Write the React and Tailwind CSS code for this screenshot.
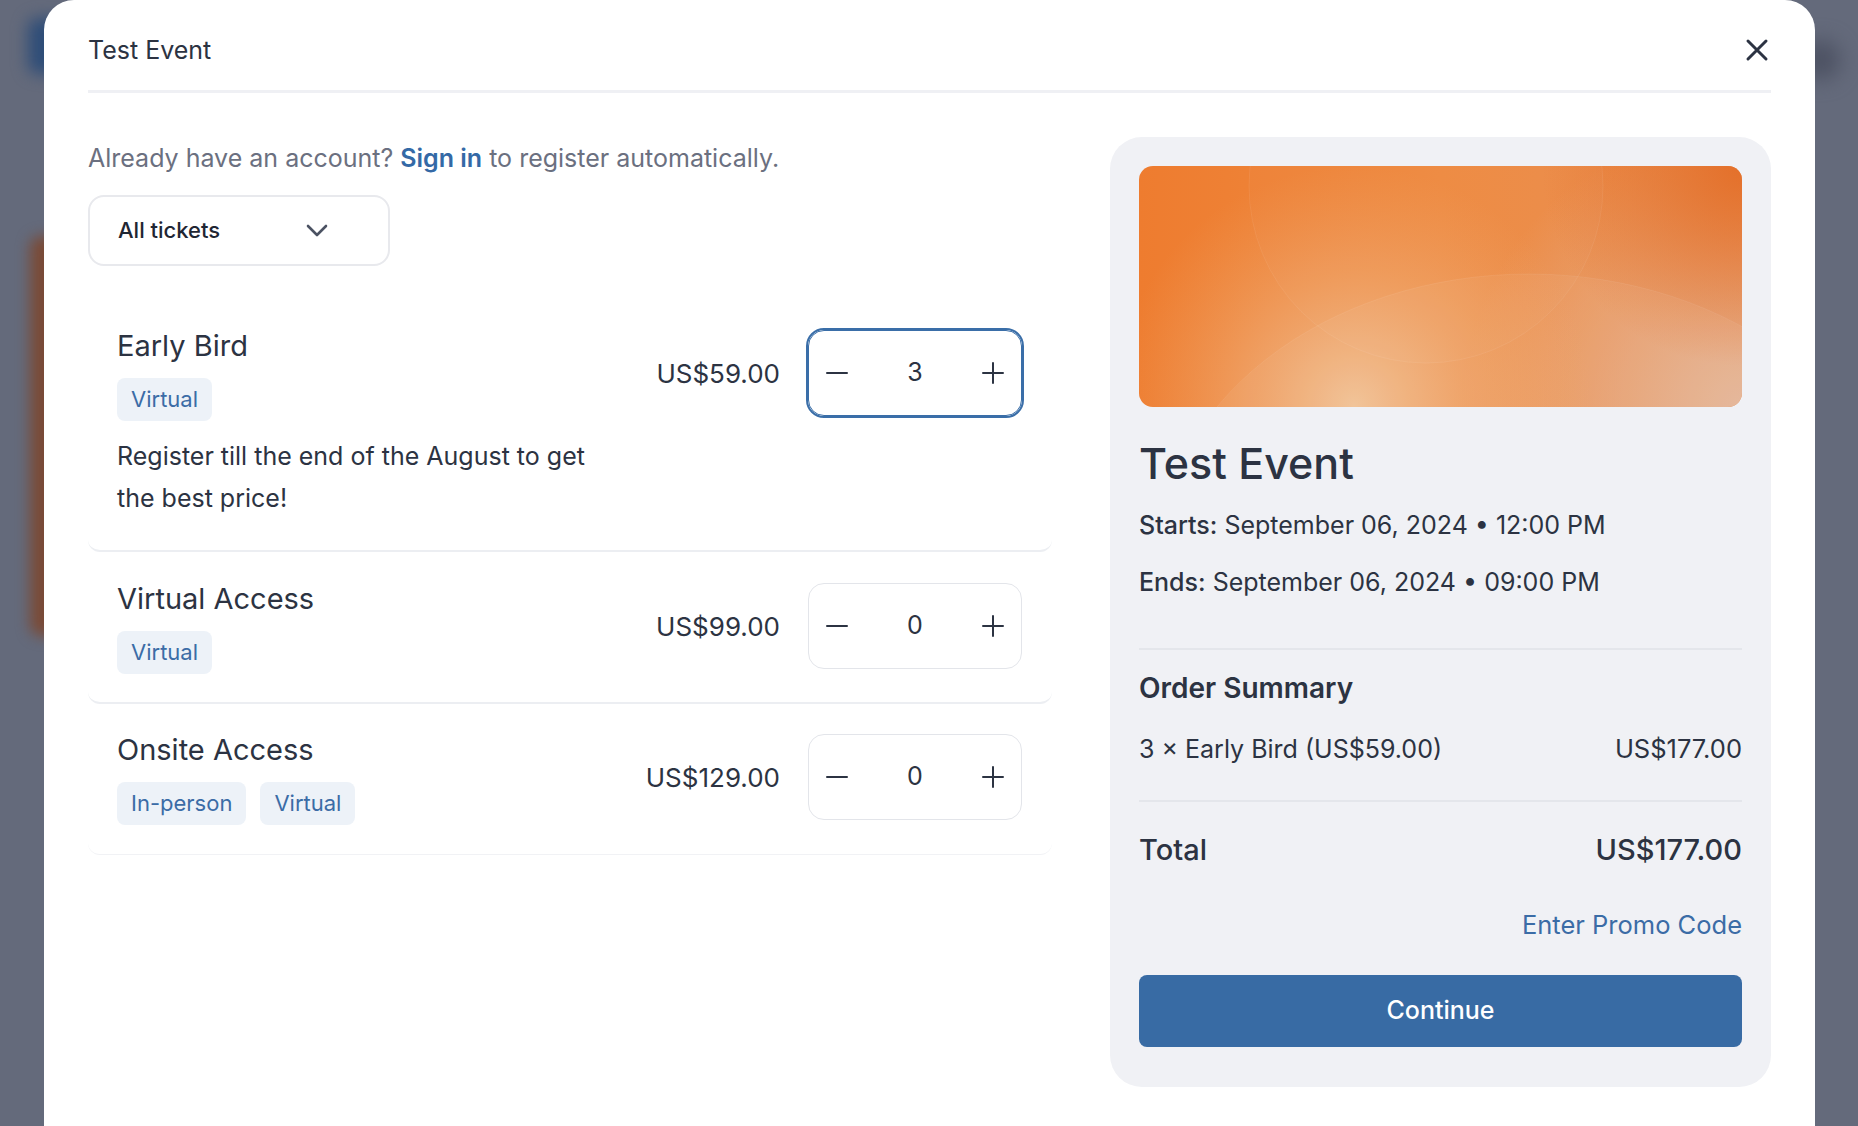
import { useState } from 'react';

const tickets = [
  {
    name: 'Early Bird',
    tags: ['Virtual'],
    price: 'US$59.00',
    description: 'Register till the end of the August to get the best price!',
    qty: 3,
    focused: true,
  },
  { name: 'Virtual Access', tags: ['Virtual'], price: 'US$99.00', qty: 0 },
  { name: 'Onsite Access', tags: ['In-person', 'Virtual'], price: 'US$129.00', qty: 0 },
];

const MinusIcon = () => (
  <svg width="22" height="22" viewBox="0 0 22 22" fill="none">
    <path d="M1 11h20" stroke="#2c3342" strokeWidth="2" strokeLinecap="round" />
  </svg>
);

const PlusIcon = () => (
  <svg width="22" height="22" viewBox="0 0 22 22" fill="none">
    <path d="M1 11h20M11 1v20" stroke="#2c3342" strokeWidth="2" strokeLinecap="round" />
  </svg>
);

const CloseIcon = () => (
  <svg width="24" height="24" viewBox="0 0 24 24" fill="none">
    <path d="M3 3l18 18M21 3L3 21" stroke="#2c3342" strokeWidth="3" strokeLinecap="round" />
  </svg>
);

const ChevronIcon = () => (
  <svg width="22" height="13" viewBox="0 0 22 13" fill="none">
    <path d="M2 2l9 9 9-9" stroke="#4b5262" strokeWidth="2.6" strokeLinecap="round" strokeLinejoin="round" />
  </svg>
);

// event cover art
const Cover = () => (
  <svg width="603" height="241" viewBox="0 0 603 241" className="block rounded-[14px]">
    <defs>
      <linearGradient id="base" x1="0" y1="0" x2="1" y2="0">
        <stop offset="0" stopColor="#ee7c2f" />
        <stop offset="0.5" stopColor="#ee8a40" />
        <stop offset="1" stopColor="#e88d50" />
      </linearGradient>
      <radialGradient id="glow" cx="215" cy="240" r="240" gradientUnits="userSpaceOnUse">
        <stop offset="0" stopColor="#f1c194" stopOpacity="1" />
        <stop offset="0.45" stopColor="#f0b07c" stopOpacity="0.6" />
        <stop offset="1" stopColor="#efa264" stopOpacity="0" />
      </radialGradient>
      <radialGradient id="br" cx="603" cy="241" r="280" gradientUnits="userSpaceOnUse">
        <stop offset="0" stopColor="#e4b597" stopOpacity="1" />
        <stop offset="1" stopColor="#e4b597" stopOpacity="0" />
      </radialGradient>
      <radialGradient id="tr" cx="603" cy="0" r="200" gradientUnits="userSpaceOnUse">
        <stop offset="0" stopColor="#e4702a" stopOpacity="1" />
        <stop offset="1" stopColor="#e4702a" stopOpacity="0" />
      </radialGradient>
    </defs>
    <rect width="603" height="241" fill="url(#base)" />
    <rect width="603" height="241" fill="url(#br)" />
    <rect width="603" height="241" fill="url(#tr)" />
    <rect width="603" height="241" fill="url(#glow)" />
    <circle cx="287" cy="20" r="177" fill="#ffffff" fillOpacity="0.025" stroke="#ffffff" strokeOpacity="0.07" />
    <ellipse cx="390" cy="400" rx="372" ry="292" fill="#ffffff" fillOpacity="0.05" stroke="#ffffff" strokeOpacity="0.07" />
  </svg>
);

const Stepper = ({ value, focused }) => (
  <div
    className={
      focused
        ? 'mt-[2px] flex h-[86px] w-[214px] items-center justify-between rounded-[16px] border border-[#3a6ea8] px-[17px] outline-2 outline-solid outline-[#3a6ea8]'
        : 'mt-[2px] flex h-[86px] w-[214px] items-center justify-between rounded-[16px] border border-[#e3e5ea] px-[17px]'
    }
  >
    <button className="flex items-center"><MinusIcon /></button>
    <span className="text-[25px] text-[#2c3342]">{value}</span>
    <button className="flex items-center"><PlusIcon /></button>
  </div>
);

const TicketRow = ({ ticket, last }) => (
  <div
    className={
      last
        ? 'flex items-start justify-between rounded-[12px] border-b border-[#f1f2f5] pt-[28px] pr-[30px] pb-[29px] pl-[29px]'
        : 'flex items-start justify-between rounded-[12px] border-b-2 border-[#eceef2] pt-[29px] pr-[30px] pb-[28px] pl-[29px]'
    }
  >
    <div>
      <h3 className="text-[29px] leading-[36px] text-[#2c3342]">{ticket.name}</h3>
      <div className="mt-[14px] flex gap-[14px]">
        {ticket.tags.map((tag) => (
          <span
            key={tag}
            className="flex h-[43px] items-center rounded-[8px] bg-[#edf2f8] px-[14px] text-[22px] text-[#3b6ca6]"
          >
            {tag}
          </span>
        ))}
      </div>
      {ticket.description && (
        <p className="mt-[14px] w-[490px] pb-[3px] text-[25px] leading-[42px] text-[#2c3342]">{ticket.description}</p>
      )}
    </div>
    <div className="flex items-center gap-[28px]">
      <span className="mt-[2px] text-[26px] text-[#2c3342]">{ticket.price}</span>
      <Stepper value={ticket.qty} focused={ticket.focused} />
    </div>
  </div>
);

export default function App() {
  const [open] = useState(true);

  return (
    <div className="relative h-[1126px] overflow-hidden bg-[#646a7b] font-['Inter','Noto_Sans',sans-serif]">
      {/* blurred page behind the backdrop */}
      <div className="absolute top-[18px] left-[28px] h-[56px] w-[60px] rounded-[10px] bg-[#2e4d78] blur-[8px]" />
      <div className="absolute top-[236px] left-[30px] h-[400px] w-[60px] rounded-[12px] bg-[#7a4a36] blur-[7px]" />
      <div className="absolute top-[40px] left-[1800px] h-[40px] w-[40px] rounded-full bg-[#4d5263] blur-[10px]" />

      {open && (
        <div className="relative ml-[44px] h-[1160px] w-[1771px] rounded-t-[30px] bg-white px-[44px]">
          <div className="flex items-start justify-between pt-[34px] pb-[24px]">
            <h2 className="text-[25px] leading-[32px] text-[#2c3342]">Test Event</h2>
            <button className="mt-[4px] mr-[2px]"><CloseIcon /></button>
          </div>
          <div className="h-[3px] bg-[#eff0f4]" />

          <div className="flex gap-[58px] pt-[44px]">
            <div className="w-[964px]">
              <p className="text-[25px] leading-[42px] text-[#6b7080]">
                Already have an account?{' '}
                <a className="font-semibold text-[#3469a6]">Sign in</a> to register automatically.
              </p>
              <div className="mt-[16px] flex h-[71px] w-[302px] items-center justify-between rounded-[16px] border-2 border-[#e8e9ed] pr-[60px] pl-[28px]">
                <span className="text-[22px] font-medium text-[#1f2633]">All tickets</span>
                <ChevronIcon />
              </div>

              <div className="mt-[33px]">
                {tickets.map((t, i) => (
                  <TicketRow key={t.name} ticket={t} last={i === tickets.length - 1} />
                ))}
              </div>
            </div>

            <div className="w-[661px] self-start rounded-[32px] bg-[#f0f1f5] px-[29px] pt-[29px] pb-[40px]">
              <Cover />
              <h1 className="mt-[31px] text-[43px] leading-[50px] font-medium text-[#2c3342]">Test Event</h1>
              <p className="mt-[18px] text-[25px] leading-[38px] text-[#2c3342]">
                <span className="font-medium">Starts:</span> September 06, 2024 • 12:00 PM
              </p>
              <p className="mt-[19px] text-[25px] leading-[38px] text-[#2c3342]">
                <span className="font-medium">Ends:</span> September 06, 2024 • 09:00 PM
              </p>
              <div className="mt-[47px] h-[2px] bg-[#e4e6eb]" />
              <h3 className="mt-[20px] text-[28px] leading-[36px] font-semibold text-[#2c3342]">Order Summary</h3>
              <div className="mt-[24px] flex justify-between text-[25px] leading-[38px] text-[#2c3342]">
                <span>3 × Early Bird (US$59.00)</span>
                <span className="text-[25.5px]">US$177.00</span>
              </div>
              <div className="mt-[32px] h-[2px] bg-[#e4e6eb]" />
              <div className="mt-[28px] flex justify-between text-[29px] leading-[40px] font-medium text-[#2c3342]">
                <span>Total</span>
                <span>US$177.00</span>
              </div>
              <p className="mt-[36px] text-right text-[25.5px] leading-[38px] text-[#3b6ca6]">Enter Promo Code</p>
              <button className="mt-[31px] flex h-[72px] w-full items-center justify-center rounded-[8px] bg-[#386ba4] text-[25px] font-medium text-white">
                Continue
              </button>
            </div>
          </div>
        </div>
      )}
    </div>
  );
}
